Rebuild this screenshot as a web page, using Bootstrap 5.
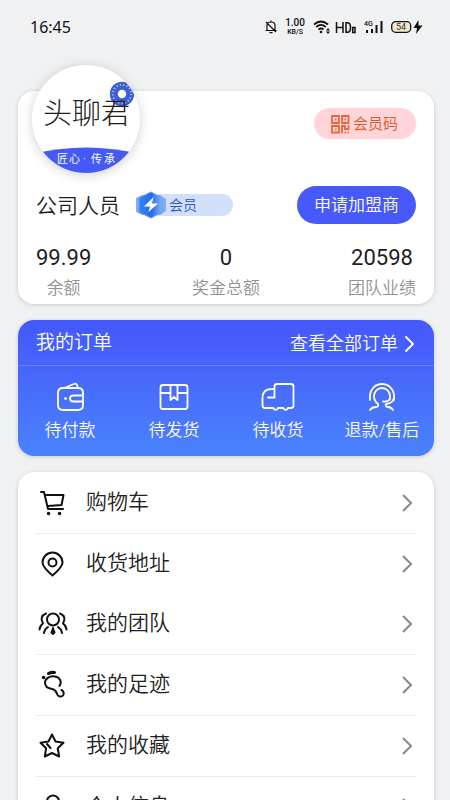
<!DOCTYPE html>
<html lang="zh-CN">
<head>
<meta charset="utf-8">
<meta name="viewport" content="width=device-width, initial-scale=1">
<title>我的</title>
<link href="https://cdn.jsdelivr.net/npm/bootstrap@5.3.0/dist/css/bootstrap.min.css" rel="stylesheet">
<style>
body{background:#f0f1f3;color:#1e1e1e;font-family:Roboto,"Noto Sans CJK SC",sans-serif;font-weight:350;line-height:1.2}
.screen{scrollbar-width:none}
.screen::-webkit-scrollbar{display:none}
.statusbar{height:52px;padding:2px 27px 0 30px;color:#111;font-weight:400}
.clock{font:400 16px "Noto Sans",sans-serif}
.rate{font-size:10px;line-height:10px;font-weight:500}
.rate small{display:block;font-size:7px;line-height:8px}
.panels{padding:39px 16px 0 18px;gap:16px}
.panel{border-radius:16px;box-shadow:0 1px 4px rgba(0,0,0,.16)}
.gutter{padding-left:18px;padding-right:18px}
.profile-top{padding-left:14px;padding-right:18px}
.avatar{width:108px;height:108px;margin-top:-26px;box-shadow:0 2px 12px rgba(0,0,0,.18)}
.code-btn{margin-top:17px;height:31px;padding:2px 18px 0 16px;background:#ffd5da;color:#e0571e;font-size:15px;font-weight:350;gap:3px}
.identity{margin-top:13px}
.fs-name{font-size:21px;font-weight:350;padding-top:3px}
.level{margin-left:20px;width:93px;height:22px;background:#d3e0fc;color:#2857c8;font-size:14px}
.level svg{margin:0 2px 0 -5px}
.apply-btn{height:38px;padding:1px 17px 0;background:#4759fa;color:#fff;font-size:17px;font-weight:350}
.stats{display:grid;grid-template-columns:1fr auto 1fr;margin-top:20px}
.stats b{font-size:22px;line-height:28px;font-weight:400}
.stats span{font-size:17px;line-height:32px;color:#929292}
.orders{background:linear-gradient(#4557fc,#4a82fb);color:#fff}
.orders-head{height:46px;padding-top:2px;border-bottom:1px solid #6b7ffc;font-size:18px}
.orders-head h2{font-size:19px;font-weight:350}
.orders-body{padding:14px 0 10px}
.orders-body a{font-size:17px;line-height:32px}
.menu-list{padding-top:1px}
.menu-link{height:60px;font-size:21px;color:#222}
.menu-link svg:first-child{margin:0 17px 0 0}
.ruled{border-bottom:1px solid #e9eaeb}
.ink{fill:none;stroke:#111;stroke-width:2;stroke-linecap:round;stroke-linejoin:round}
.pale{fill:none;stroke:#fff;stroke-width:1.8;stroke-linecap:round;stroke-linejoin:round}
.arrow{fill:none;stroke:#84898c;stroke-width:2}
</style>
<script src="https://cdn.jsdelivr.net/npm/bootstrap@5.3.0/dist/js/bootstrap.bundle.min.js"></script>
</head>
<body>
<div class="screen vh-100 overflow-auto">
<header class="statusbar d-flex align-items-center justify-content-between">
  <span class="clock">16:45</span>
  <div class="d-flex align-items-center">
    <svg class="me-2" width="12" height="14" viewBox="0 0 12 14" fill="none" stroke="#111" stroke-width="1.2"><path d="M2 10V5.500Q2 2 6 2t4 3.500V10M.5 10.500h11M6 .5V2M4.500 12.700h3M1 2l10 10"/></svg>
    <div class="rate text-center me-2">1.00<small>KB/S</small></div>
    <svg class="me-1" width="18" height="14" viewBox="0 0 18 14" fill="none" stroke="#111" stroke-width="1.700"><path d="M1 4.500Q8-1.500 15 4.500M3.200 7Q8 2.800 12.800 7M5.500 9.500Q8 7.500 10.500 9.500"/><circle cx="8" cy="12" r="1.300" fill="#111" stroke="none"/><path d="M13 10.500l2-2.500 2 2.500zM13 11.500l2 2.500 2-2.500z" fill="#111" stroke="none"/></svg>
    <svg class="me-2" width="21" height="13" viewBox="0 0 21 13" fill="none" stroke="#111" stroke-width="1.500"><path d="M1.500 1v11M8 1v11M1.500 6.500H8M11 1.700h1.500q3 0 3 4.800t-3 4.800H11zM17.700 6.500h2.300v5h-2.300z"/></svg>
    <svg class="me-2" width="19" height="14" viewBox="0 0 19 14"><text x="0" y="6" font-size="7" font-weight="500" fill="#111">4G</text><path d="M3 10v3M8 9v4M12.500 5v8M17.500 1v12" stroke="#111" stroke-width="2"/></svg>
    <svg width="32" height="14" viewBox="0 0 32 14"><rect x=".7" y="1.700" width="19" height="10.600" rx="4" fill="#f2e8cb" stroke="#111" stroke-width="1.300"/><text x="10" y="10" font-size="9" text-anchor="middle" fill="#333">54</text><path d="M27.500 0l-5 8h3.500l-1 6 6.500-8.500h-4z" fill="#111"/></svg>
  </div>
</header>
<main class="panels d-flex flex-column">
  <section class="panel bg-white">
    <div class="profile-top d-flex justify-content-between align-items-start">
      <svg class="avatar rounded-circle bg-white" viewBox="0 0 108 108" role="img" aria-label="头聊君">
        <circle cx="90" cy="29" r="8.200" fill="none" stroke="#3e5fd0" stroke-width="8"/><circle cx="90" cy="29" r="9.200" fill="none" stroke="#a9bdf4" stroke-width="2" stroke-dasharray="1.200 2.200"/>
        <text y="59" font-size="29" font-weight="300" fill="#221d1b"><tspan x="11">头</tspan><tspan x="40">聊</tspan><tspan x="69">君</tspan></text>
        <path d="M0 89Q54 76 108 89V108H0z" fill="#4459f6"/>
        <text y="98" font-size="11" font-weight="400" fill="#fff"><tspan x="25">匠</tspan><tspan x="37">心</tspan><tspan x="51">·</tspan><tspan x="59">传</tspan><tspan x="72">承</tspan></text>
      </svg>
      <button type="button" class="code-btn btn border-0 rounded-pill d-flex align-items-center">
        <svg width="20" height="20" viewBox="0 0 20 20" fill="none" stroke="#e8673a" stroke-width="1.800"><path d="M2 1h7v7H2zM12 1h6.500v7H12zM2 11h7v6.500H2zM5 4.500h1.500M14.500 4.500H16M5 14.300h1.500M12 18.500V11h3v3h3.500v-4M14.500 17.500h1.500M17.500 17.500H19"/></svg>
        <span>会员码</span>
      </button>
    </div>
    <div class="identity gutter d-flex align-items-center">
      <h1 class="fs-name mb-0">公司人员</h1>
      <div class="level rounded-pill d-flex align-items-center">
        <svg class="flex-shrink-0" width="32" height="28" viewBox="0 0 32 28"><defs><linearGradient id="gem"><stop stop-color="#2f86f5"/><stop offset=".55" stop-color="#276bee"/><stop offset="1" stop-color="#89b4f3"/></linearGradient></defs><path d="M1 7l6-3h18l6 4v12l-6 4H7l-6-3z" fill="#84aef2"/><path d="M16 1l11 6v14l-11 6-12-6V7z" fill="url(#gem)" stroke="#659be9"/><path d="M18.500 6L9 15.500h6L13.500 21 23 12.500h-6z" fill="#fff"/></svg>
        <span>会员</span>
      </div>
      <button type="button" class="apply-btn btn border-0 rounded-pill ms-auto">申请加盟商</button>
    </div>
    <div class="stats gutter">
      <div class="d-flex flex-column align-items-center me-auto"><b>99.99</b><span>余额</span></div>
      <div class="d-flex flex-column align-items-center"><b>0</b><span>奖金总额</span></div>
      <div class="d-flex flex-column align-items-center ms-auto"><b>20598</b><span>团队业绩</span></div>
    </div>
  </section>

  <section class="panel orders">
    <div class="orders-head gutter d-flex align-items-center justify-content-between">
      <h2 class="mb-0">我的订单</h2>
      <a href="#" class="d-flex align-items-center gap-1 text-white text-decoration-none">查看全部订单<svg width="14" height="16" viewBox="0 0 14 16" class="pale"><path d="M4 1l7 7-7 7"/></svg></a>
    </div>
    <nav class="orders-body row row-cols-4 g-0 text-center" aria-label="我的订单">
      <a href="#" class="col d-flex flex-column align-items-center text-nowrap text-white text-decoration-none"><svg class="pale" width="34" height="34" viewBox="0 0 34 34"><path d="M11 8h-1q-5 0-5 5v12q0 5 5 5h15q5 0 5-5V13q0-5-5-5H11L21 4q2-1 3 1l1 3M30 15.500H20.500q-3.500 0-3.500 3t3.500 3H30"/><circle cx="12.500" cy="18.500" r="1" fill="#fff" stroke-width="1"/></svg>待付款</a>
      <a href="#" class="col d-flex flex-column align-items-center text-nowrap text-white text-decoration-none"><svg class="pale" width="34" height="34" viewBox="0 0 34 34"><rect x="3.500" y="5" width="27" height="24" rx="2.500"/><path d="M3.500 13h10M20.500 13h10M13.500 5v15l3.500-3 3.500 3V5"/></svg>待发货</a>
      <a href="#" class="col d-flex flex-column align-items-center text-nowrap text-white text-decoration-none"><svg class="pale" width="34" height="34" viewBox="0 0 34 34"><path d="M13.500 9V6.500Q13.500 4 16 4h14q2.500 0 2.500 2.500v19Q32.500 28 30 28h-3q-1.500 3-4 1l-1-1h-5q-1.500 3-4 1l-1-1H4q-2.500 0-2.500-2.500V18q0-9 9-9h3v8.500H7"/></svg>待收货</a>
      <a href="#" class="col d-flex flex-column align-items-center text-nowrap text-white text-decoration-none"><svg class="pale" width="34" height="34" viewBox="0 0 34 34"><path d="M5 20v-4a12 12 0 0 1 24 0v4M13 24q-4-3-4-8a8 8 0 0 1 16 0v3q-2 3-7 2.500M29 17q0 6-8 7M13 24q1 3-2 3-4 0-6 3M21 24q-1 3 2 3 3 0 5 3"/></svg>退款/售后</a>
    </nav>
  </section>

  <nav class="panel menu-list gutter bg-white" aria-label="菜单">
    <div class="ruled"><a href="#" class="menu-link d-flex align-items-center text-decoration-none"><svg class="ink" width="33" height="32" viewBox="0 0 33 32"><path d="M5 5h3l4 17h15M9 8h18.500l-2 10L12 19"/><path d="M12.500 26.500h.1M23.500 26.500h.1" stroke-width="3.500"/></svg>购物车<svg class="arrow ms-auto" width="14" height="18" viewBox="0 0 14 18"><path d="M1 1l8 8-8 8"/></svg></a></div>
    <div><a href="#" class="menu-link d-flex align-items-center text-decoration-none"><svg class="ink" width="33" height="32" viewBox="0 0 33 32"><path d="M16.500 27.500Q6.500 19 6.500 14.500a10 10 0 0 1 20 0q0 4.500-10 13z"/><circle cx="16.500" cy="14.500" r="4"/></svg>收货地址<svg class="arrow ms-auto" width="14" height="18" viewBox="0 0 14 18"><path d="M1 1l8 8-8 8"/></svg></a></div>
    <div class="ruled"><a href="#" class="menu-link d-flex align-items-center text-decoration-none"><svg class="ink" width="33" height="32" viewBox="0 0 33 32"><circle cx="17" cy="11.500" r="6"/><path d="M10 5.500q-7 3-3 10-3 2-3.500 6M24 5.500q7 3 3 10 3 2 3.500 6M12 19q-3.500 2-4 6M22 19q3.500 2 4 6"/><path d="M17 20v1l1.500 3.500-1.500 1.500-1.500-1.500L17 21" fill="#111"/></svg>我的团队<svg class="arrow ms-auto" width="14" height="18" viewBox="0 0 14 18"><path d="M1 1l8 8-8 8"/></svg></a></div>
    <div class="ruled"><a href="#" class="menu-link d-flex align-items-center text-decoration-none"><svg class="ink" width="33" height="32" viewBox="0 0 33 32"><path d="M23.500 17C26 13 24.500 8.500 19 7.500 13 6.500 9 10 9 13.500c0 4 3.500 6 7 6.500 4 .5 4 2.500 5 5 1 2.500 4.500 3.500 6 1.500 1.500-2 .5-4.500-1.500-5.500"/><path d="M12.500 4.500q3-1.500 6-1" stroke-width="3"/><path d="M7.500 8.500h.1" stroke-width="3.500"/></svg>我的足迹<svg class="arrow ms-auto" width="14" height="18" viewBox="0 0 14 18"><path d="M1 1l8 8-8 8"/></svg></a></div>
    <div class="ruled"><a href="#" class="menu-link d-flex align-items-center text-decoration-none"><svg class="ink" width="33" height="32" viewBox="0 0 33 32"><path d="M16 4.500l3.500 7 8 1.300-5.800 5.500 1.500 8.200-7.200-3.500-7.200 3.500 1.300-8.200L4.500 12.800l8-1.300zM11 14l3.500 4"/></svg>我的收藏<svg class="arrow ms-auto" width="14" height="18" viewBox="0 0 14 18"><path d="M1 1l8 8-8 8"/></svg></a></div>
    <div><a href="#" class="menu-link d-flex align-items-center text-decoration-none"><svg class="ink" width="33" height="32" viewBox="0 0 33 32"><circle cx="17" cy="10.500" r="6"/><path d="M6 28q0-9 11-9t11 9z"/></svg>个人信息<svg class="arrow ms-auto" width="14" height="18" viewBox="0 0 14 18"><path d="M1 1l8 8-8 8"/></svg></a></div>
  </nav>
</main>
</div>
</body>
</html>
